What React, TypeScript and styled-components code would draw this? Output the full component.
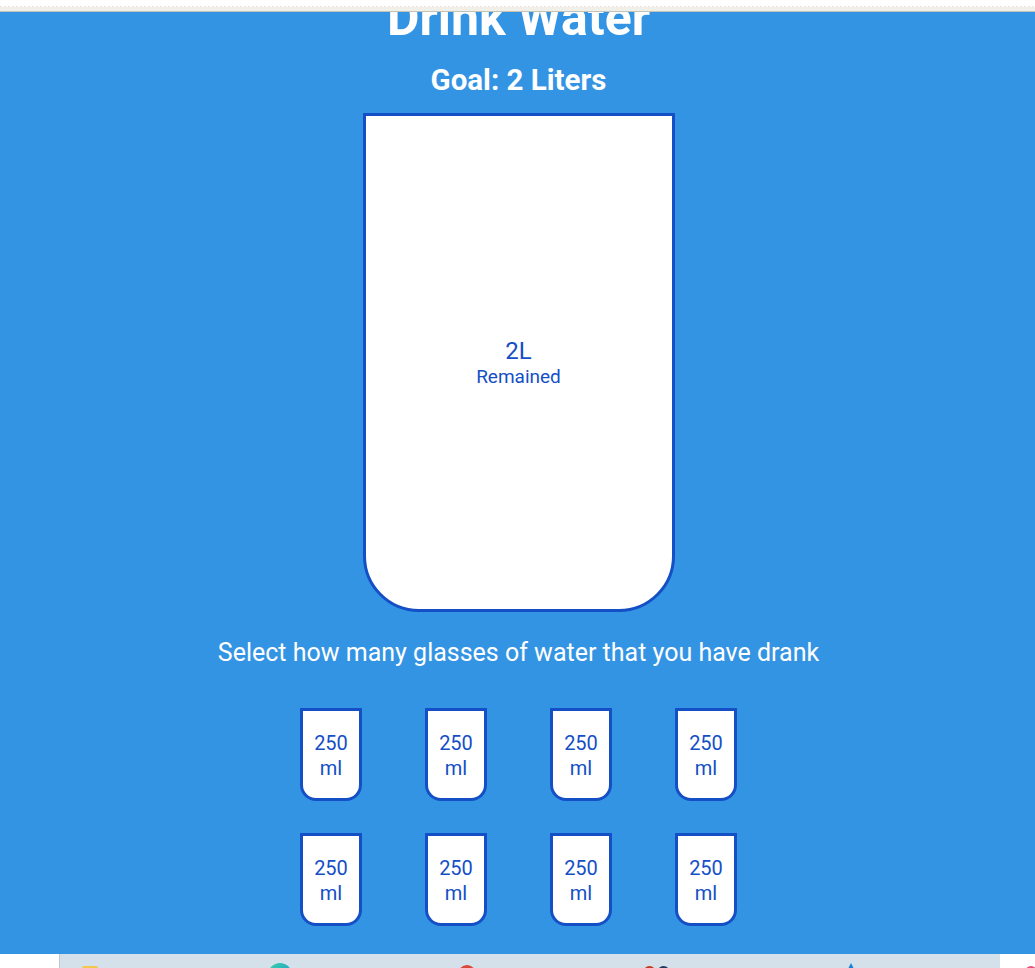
import React from "react";
import styled, { createGlobalStyle } from "styled-components";

const Global = createGlobalStyle`
  html, body { margin: 0; padding: 0; overflow: hidden; }
  body { font-family: Roboto, "Liberation Sans", Arial, sans-serif; background: #3494e4; }
`;

const Frame = styled.div`
  height: 968px;
  display: flex;
  flex-direction: column;
  overflow: hidden;
`;

const Chrome = styled.div`
  height: 12px;
  flex: none;
  display: flex;
  flex-direction: column;
  background: #ffffff;
`;

const ChromeWhite = styled.div`
  height: 6px;
  background: #ffffff;
`;

const ChromeDots = styled.div`
  height: 1px;
  background: repeating-linear-gradient(90deg, #f3dde8 0 2px, #ffffff 2px 4px);
`;

const ChromeBand = styled.div`
  height: 4px;
  background: #f0efe8;
`;

const ChromeEdge = styled.div`
  height: 1px;
  background: #c4c3ba;
`;

const Main = styled.main`
  height: 942px;
  flex: none;
  overflow: hidden;
  background: #3494e4;
  color: #ffffff;
  display: flex;
  flex-direction: column;
  align-items: center;
  padding-left: 2px;
  box-sizing: border-box;
`;

const Title = styled.h1`
  margin: -24px 0 0;
  font-size: 50px;
  line-height: 60px;
  font-weight: 700;
`;

const Goal = styled.h3`
  margin: 14px 0 0;
  font-size: 29.5px;
  line-height: 36px;
  font-weight: 700;
`;

const Cup = styled.div<{ $small?: boolean }>`
  box-sizing: border-box;
  background: #ffffff;
  border: 3px solid #144fc6;
  color: #144fc6;
  width: ${(p) => (p.$small ? "62px" : "312px")};
  height: ${(p) => (p.$small ? "93px" : "499px")};
  border-radius: ${(p) => (p.$small ? "0 0 16px 16px" : "0 0 56px 56px")};
  display: flex;
  flex-direction: column;
  align-items: center;
  justify-content: center;
  text-align: center;
`;

const BigCup = styled(Cup)`
  margin-top: 15px;
`;

const Liters = styled.span`
  font-size: 24px;
  line-height: 28px;
`;

const Remained = styled.small`
  font-size: 19px;
  line-height: 23px;
`;

const Prompt = styled.p`
  margin: 26px 0 0;
  font-size: 25px;
  line-height: 30px;
`;

const Cups = styled.div`
  margin-top: 40px;
  display: grid;
  grid-template-columns: repeat(4, 62px);
  column-gap: 63px;
  row-gap: 32px;
`;

const SmallText = styled.span`
  font-size: 20px;
  line-height: 25px;
  &:first-child { margin-top: 2px; }
`;

const Taskbar = styled.div`
  height: 48px;
  flex: none;
  display: flex;
`;

const TaskLeft = styled.div`
  width: 59px;
  background: #ffffff;
  border-right: 1px solid #c4c7c9;
`;

const TaskMiddle = styled.div`
  flex: 1;
  background: #d5e1ea;
  display: flex;
  align-items: flex-start;
`;

const TaskRight = styled.div`
  width: 35px;
  background: #ffffff;
  display: flex;
  align-items: flex-start;
`;

const TaskIcon = styled.div<{ $gap: number; $top: number; $w: number; $bg: string; $round?: boolean }>`
  flex: none;
  margin-left: ${(p) => p.$gap}px;
  margin-top: ${(p) => p.$top}px;
  width: ${(p) => p.$w}px;
  height: ${(p) => p.$w}px;
  background: ${(p) => p.$bg};
  border-radius: ${(p) => (p.$round ? "50%" : "2px")};
`;

const PairIcon = styled.div`
  flex: none;
  margin-left: 167px;
  margin-top: 12px;
  display: flex;
  gap: 1px;
`;

const Dot = styled.div<{ $bg: string }>`
  width: 13px;
  height: 13px;
  border-radius: 50%;
  background: ${(p) => p.$bg};
`;

const Arrow = styled.div`
  flex: none;
  margin-left: 174px;
  margin-top: 9px;
  width: 0;
  height: 0;
  border-left: 7px solid transparent;
  border-right: 7px solid transparent;
  border-bottom: 14px solid #1a7fd0;
`;

export default function App() {
  const cups = Array.from({ length: 8 });
  return (
    <>
      <Global />
      <Frame>
        <Chrome>
          <ChromeWhite />
          <ChromeDots />
          <ChromeBand />
          <ChromeEdge />
        </Chrome>
        <Main>
          <Title>Drink Water</Title>
          <Goal>Goal: 2 Liters</Goal>
          <BigCup>
            <Liters>2L</Liters>
            <Remained>Remained</Remained>
          </BigCup>
          <Prompt>Select how many glasses of water that you have drank</Prompt>
          <Cups>
            {cups.map((_, i) => (
              <Cup $small key={i}>
                <SmallText>250</SmallText>
                <SmallText>ml</SmallText>
              </Cup>
            ))}
          </Cups>
        </Main>
        <Taskbar>
          <TaskLeft />
          <TaskMiddle>
            <TaskIcon $gap={22} $top={12} $w={16} $bg="#f2c94c" />
            <TaskIcon $gap={170} $top={9} $w={24} $bg="linear-gradient(135deg, #3ad1a8, #1b8fd8)" $round />
            <TaskIcon $gap={166} $top={11} $w={18} $bg="#d8463c" $round />
            <PairIcon>
              <Dot $bg="#c23a22" />
              <Dot $bg="#1f3a5c" />
            </PairIcon>
            <Arrow />
          </TaskMiddle>
          <TaskRight>
            <TaskIcon $gap={25} $top={12} $w={12} $bg="#e8507c" $round />
          </TaskRight>
        </Taskbar>
      </Frame>
    </>
  );
}
